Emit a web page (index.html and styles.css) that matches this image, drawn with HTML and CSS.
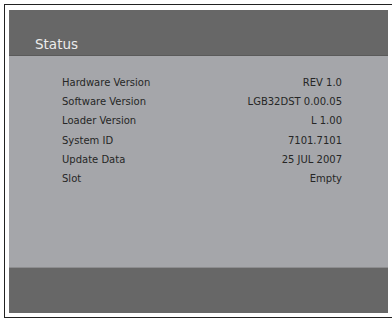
FILE: index.html
```html
<!DOCTYPE html>
<html lang="en">
<head>
    <meta charset="UTF-8">
    <meta name="viewport" content="width=device-width, initial-scale=1.0">
    <title>Status</title>
    <link rel="stylesheet" href="styles.css">
</head>
<body>
    <div class="frame">
        <div class="screen">
            <div class="header">Status</div>
            <div class="content">
                <div class="row"><span>Hardware Version</span><span>REV 1.0</span></div>
                <div class="row"><span>Software Version</span><span>LGB32DST 0.00.05</span></div>
                <div class="row"><span>Loader Version</span><span>L 1.00</span></div>
                <div class="row"><span>System ID</span><span>7101.7101</span></div>
                <div class="row"><span>Update Data</span><span>25 JUL 2007</span></div>
                <div class="row"><span>Slot</span><span>Empty</span></div>
            </div>
            <div class="footer"></div>
        </div>
    </div>
</body>
</html>
```

FILE: styles.css
```css
body {
    margin: 0;
    width: 392px;
    height: 320px;
    background-color: #fff;
    font-family: "DejaVu Sans", Verdana, sans-serif;
    overflow: hidden;
}
.frame {
    margin: 4px 0 0 4px;
    width: 392px;
    height: 314px;
    border-top: 1px solid #222;
    border-left: 1px solid #222;
    border-bottom: 1px solid #222;
    padding: 5px 0 0 4px;
    box-sizing: border-box;
}
.screen {
    width: 379px;
    display: flex;
    flex-direction: column;
}
.header {
    height: 46px;
    background-color: #676767;
    border-bottom: 1px solid #5a5a5a;
    color: #ececec;
    font-size: 13.5px;
    padding-left: 26px;
    display: flex;
    align-items: flex-end;
    padding-bottom: 3px;
    box-sizing: border-box;
}
.content {
    height: 211px;
    background-color: #a5a6aa;
    padding: 21px 46px 0 53px;
    box-sizing: border-box;
}
.row {
    display: flex;
    justify-content: space-between;
    height: 19.2px;
    font-size: 10px;
    color: #262626;
}
.footer {
    height: 45px;
    background-color: #676767;
    border-top: 1px solid #8d8d8f;
}
```
